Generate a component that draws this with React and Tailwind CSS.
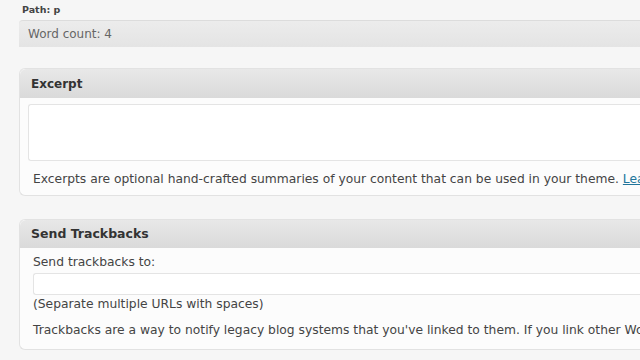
export default function App() {
  const font = { fontFamily: '"DejaVu Sans", Verdana, sans-serif' };
  return (
    <div className="w-[640px] h-[360px] overflow-hidden bg-[#f6f6f6] text-[#333]" style={font}>
      <div className="w-[700px] pl-[19px]">
        {/* path + word count */}
        <div className="h-[20px] pl-[3px] pt-[3px] text-[9.5px] font-bold text-[#444] leading-[14px]">Path: p</div>
        <div className="h-[27px] rounded-tl-[4px] border-t border-[#dcdcdc] bg-gradient-to-b from-[#ececec] to-[#e4e4e4] pl-[9px] flex items-center text-[12px] text-[#666]">
          Word count: 4
        </div>

        {/* Excerpt */}
        <div className="mt-[21px] rounded-l-[6px] border border-r-0 border-[#e2e2e2] bg-[#fcfcfc]">
          <div className="h-[29px] rounded-tl-[6px] bg-gradient-to-b from-[#e8e8e8] to-[#dadada] pl-[11px] flex items-center text-[12px] font-bold text-[#333]">
            Excerpt
          </div>
          <div className="pt-[6px] pl-[8px]">
            <div className="h-[57px] border border-[#e4e4e4] rounded-l-[3px] border-r-0 bg-white" />
            <p className="pl-[5px] pt-[10px] pb-[8px] text-[12.3px] leading-[16px] text-[#444] whitespace-nowrap">
              Excerpts are optional hand-crafted summaries of your content that can be used in your theme.{" "}
              <span className="text-[#21759b] underline">Learn more about manual excerpts.</span>
            </p>
          </div>
        </div>

        {/* Send Trackbacks */}
        <div className="mt-[23px] rounded-l-[6px] border border-r-0 border-[#e2e2e2] bg-[#fcfcfc]">
          <div className="h-[28px] rounded-tl-[6px] bg-gradient-to-b from-[#e8e8e8] to-[#dadada] pl-[11px] flex items-center text-[12.5px] font-bold text-[#333]">
            Send Trackbacks
          </div>
          <div className="pl-[13px] pt-[6px] pb-[11px] text-[12.3px] leading-[16px] text-[#444] whitespace-nowrap">
            <div>Send trackbacks to:</div>
            <div className="mt-[3px] h-[22px] border border-[#e4e4e4] border-r-0 rounded-l-[3px] bg-white" />
            <div className="mt-[1px]">(Separate multiple URLs with spaces)</div>
            <div className="mt-[10px]">
              Trackbacks are a way to notify legacy blog systems that you've linked to them. If you link other WordPress blogs they'll be notified automatically using pingbacks.
            </div>
          </div>
        </div>
      </div>
    </div>
  );
}
